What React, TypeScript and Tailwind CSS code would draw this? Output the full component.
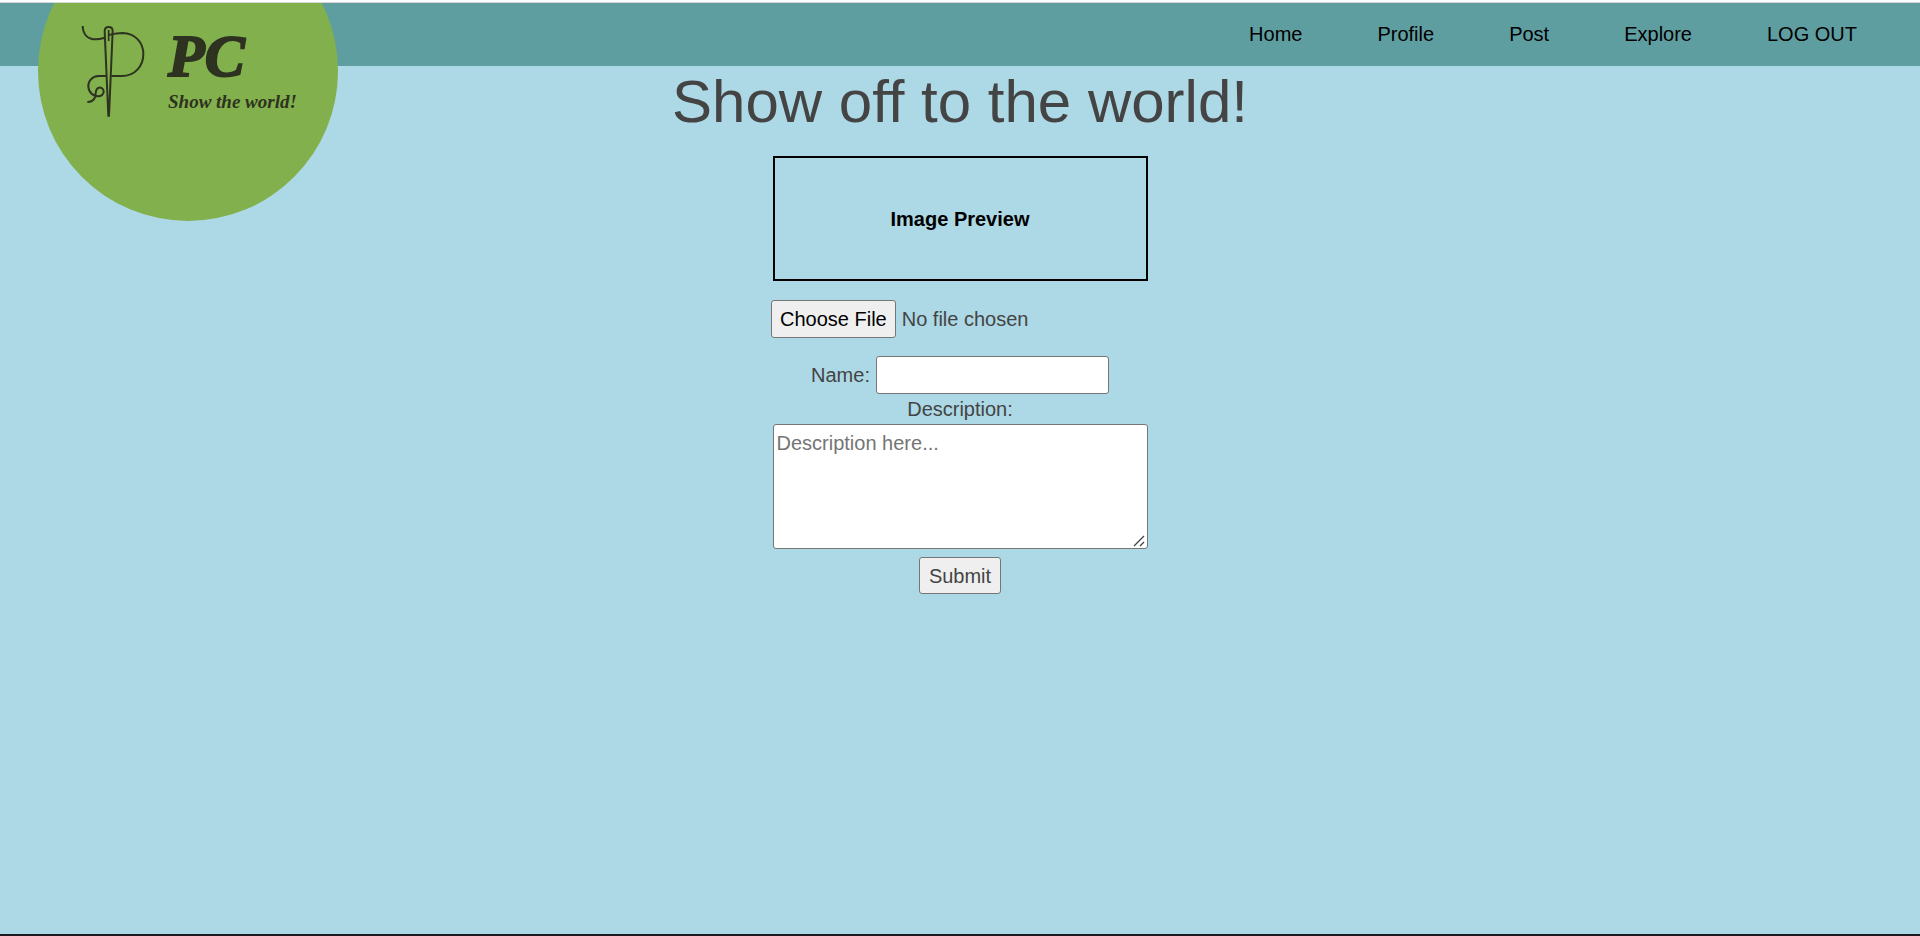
const links = ["Home", "Profile", "Post", "Explore", "LOG OUT"];

function Needle() {
  return (
    <svg
      viewBox="240 72 198 282"
      className="h-[94px] w-[66px] shrink-0"
      fill="none"
      stroke="#2e3220"
      strokeWidth="6"
      aria-hidden="true"
    >
      <path d="M248 78C249 104 264 118 288 118C300 118 308 115 315 113" />
      <path d="M326 105C343 101 354 99 368 99C404 100 430 126 430 162C430 199 404 228 366 228H334" />
      <path d="M320 228H296C276 229 264 243 265 260C266 279 282 289 294 289C305 289 312 281 311 274C310 265 303 262 297 263C283 265 290 283 284 294C280 302 273 306 262 306" />
      <path d="M325 347L314 94C314 86 318 81 326 81C334 81 338 86 338 94L327 347Z" />
      <path d="M326 90V123" strokeWidth="5" />
    </svg>
  );
}

function Logo() {
  return (
    <a
      href="#home"
      className="absolute left-[38px] top-0 block h-[218px] w-[300px] overflow-hidden font-['Liberation_Serif',serif] font-bold italic text-[#2e3220]"
    >
      <span className="-mt-[82px] flex h-[300px] items-start rounded-full bg-[#82b04c] pl-[42px] pt-[103px]">
        <Needle />
        <span className="flex flex-col gap-0.5 pl-[22px]">
          <span className="text-[60px] leading-[64px] [-webkit-text-stroke:2px_#2e3220]">PC</span>
          <span className="text-[19px] leading-6">Show the world!</span>
        </span>
      </span>
    </a>
  );
}

export default function App() {
  return (
    <div className="flex min-h-screen flex-col border-b-2 border-[#1c1820] bg-[#add8e6] font-['Liberation_Sans',Arial,sans-serif] text-xl text-[#444]">
      <div className="h-[3px] border-b border-[#d5d5d8] bg-white" />
      <div className="relative">
        <header className="flex h-[63px] items-center justify-end bg-[#5f9ea0] pb-0.5 pr-[63px]">
          <nav className="flex gap-[75px] text-black">
            {links.map((link) => (
              <a key={link} href="#">
                {link}
              </a>
            ))}
          </nav>
        </header>
        <Logo />
        <main className="flex flex-col items-center">
          <h1 className="mb-[18px] text-[60px] leading-[72px]">Show off to the world!</h1>
          <div className="flex h-[125px] w-[375px] items-center justify-center border-2 border-black font-bold text-black">
            Image Preview
          </div>
          <form className="flex flex-col items-center" onSubmit={(e) => e.preventDefault()}>
            <input
              type="file"
              aria-label="Choose File"
              className="mb-[18px] mt-[19px] h-[38px] w-[378px] file:mr-1.5 file:h-[38px] file:rounded-[3px] file:border file:border-solid file:border-[#767676] file:bg-[#efefef] file:px-2 file:text-black"
            />
            <div className="flex items-center gap-1.5">
              <label htmlFor="name">Name:</label>
              <input
                id="name"
                type="text"
                className="h-[38px] w-[233px] rounded-[3px] border border-[#767676] bg-white px-0.5"
              />
            </div>
            <label htmlFor="description" className="leading-[30px]">
              Description:
            </label>
            <div className="relative flex">
              <textarea
                id="description"
                placeholder="Description here..."
                className="h-[125px] w-[375px] resize rounded-[3px] border border-[#767676] bg-white px-[3px] py-0.5 leading-[33px] placeholder:text-[#757575] [&::-webkit-resizer]:bg-transparent"
              />
              <svg
                viewBox="0 0 12 12"
                className="pointer-events-none absolute bottom-0.5 right-[3px] size-3"
                stroke="#444"
                strokeWidth="1.3"
                aria-hidden="true"
              >
                <path d="M1 11L11 1M7 11L11 7" />
              </svg>
            </div>
            <button
              type="submit"
              className="mt-2 h-[37px] rounded-[3px] border border-[#767676] bg-[#efefef] px-[9px]"
            >
              Submit
            </button>
          </form>
        </main>
      </div>
    </div>
  );
}
